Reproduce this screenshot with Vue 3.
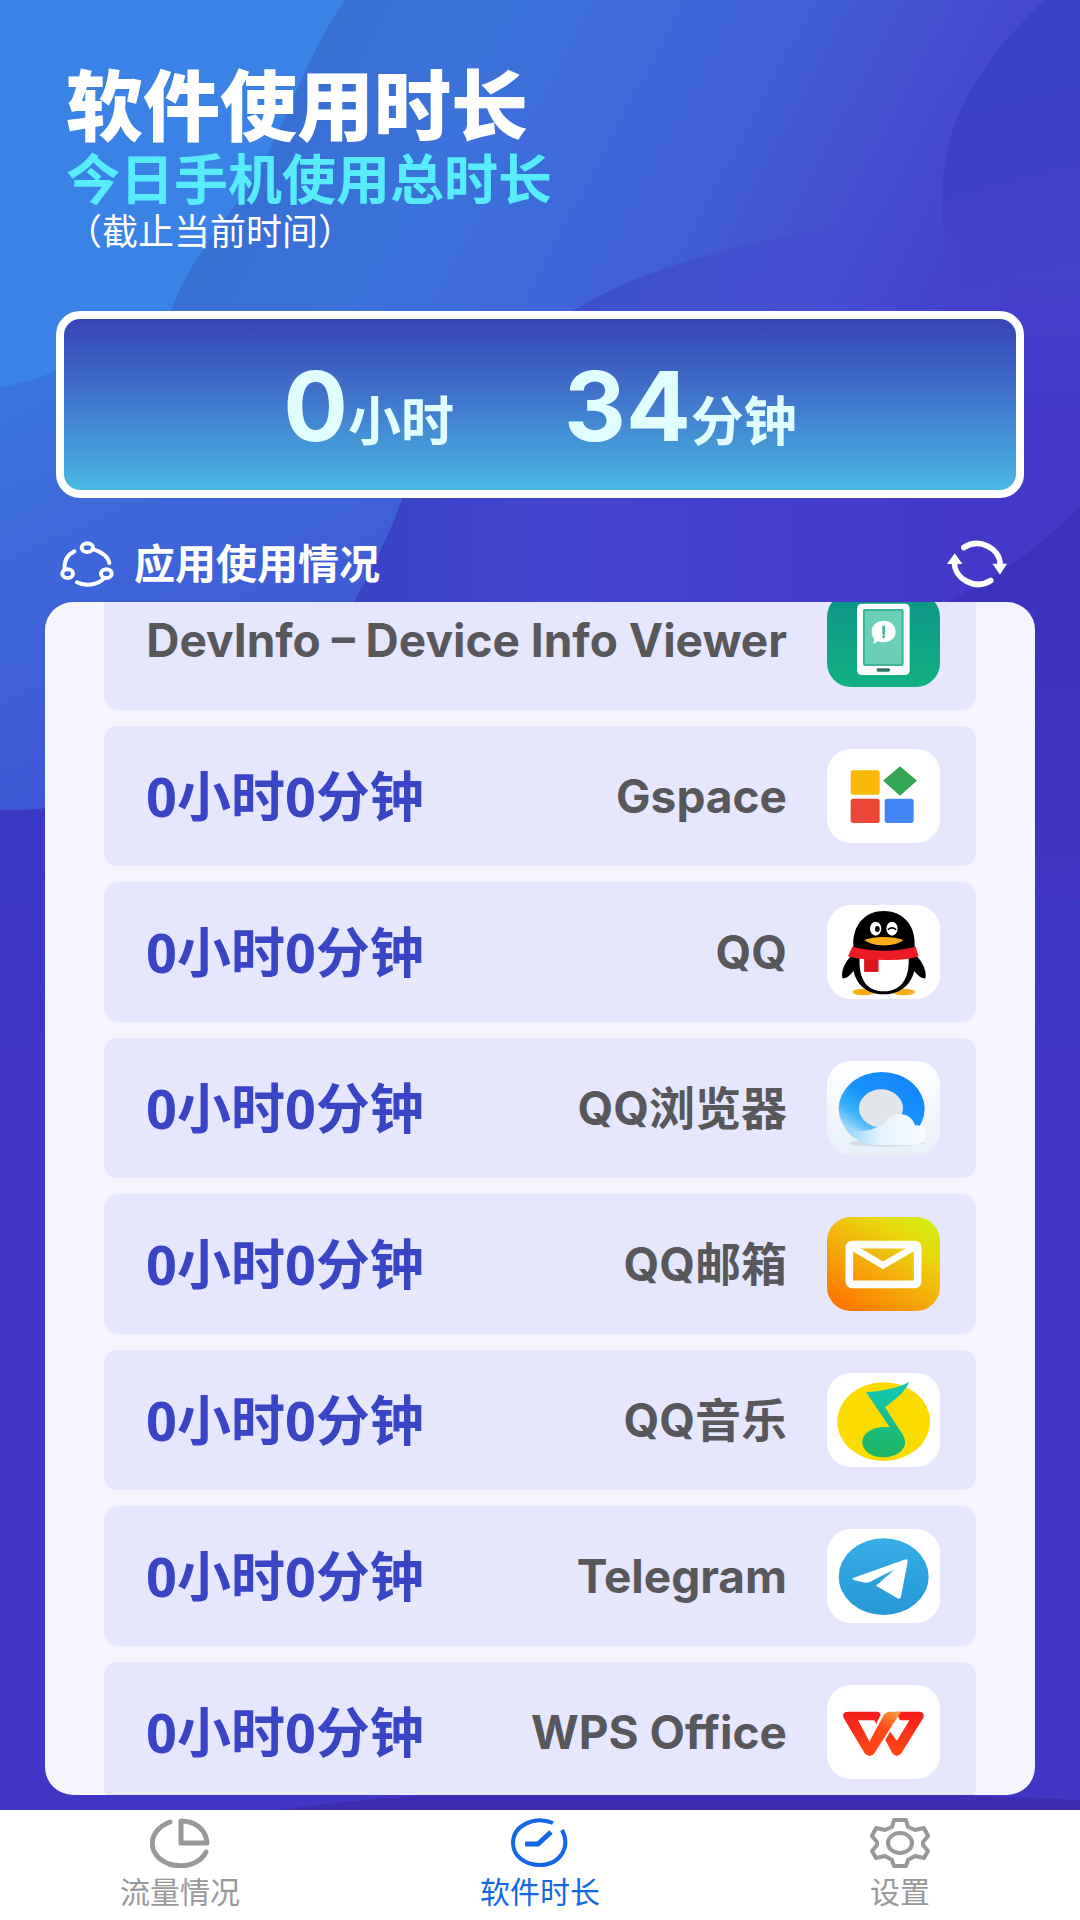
<template>
  <div class="page">
    <svg class="backdrop" viewBox="0 0 1080 1920" preserveAspectRatio="none" aria-hidden="true">
      <defs>
        <linearGradient id="bg-mid" gradientUnits="userSpaceOnUse" x1="300" y1="100" x2="900" y2="420">
          <stop offset="0" stop-color="#386fd3" />
          <stop offset="0.2" stop-color="#3b72da" />
          <stop offset="0.5" stop-color="#4064db" />
          <stop offset="0.75" stop-color="#4453d3" />
          <stop offset="1" stop-color="#4441cd" />
        </linearGradient>
        <linearGradient id="bg-left" gradientUnits="userSpaceOnUse" x1="0" y1="380" x2="200" y2="820">
          <stop offset="0" stop-color="#3a74de" />
          <stop offset="1" stop-color="#4152d4" />
        </linearGradient>
        <linearGradient id="bg-deep" gradientUnits="userSpaceOnUse" x1="580" y1="270" x2="900" y2="310">
          <stop offset="0" stop-color="#3b50c9" />
          <stop offset="0.4" stop-color="#404dce" stop-opacity="0.7" />
          <stop offset="0.8" stop-color="#4441cd" stop-opacity="0" />
        </linearGradient>
        <linearGradient id="bg-lower" gradientUnits="userSpaceOnUse" x1="380" y1="540" x2="960" y2="540">
          <stop offset="0" stop-color="#3843c6" />
          <stop offset="0.3" stop-color="#4345d0" />
          <stop offset="1" stop-color="#4338c8" />
        </linearGradient>
        <linearGradient id="bg-corner" gradientUnits="userSpaceOnUse" x1="970" y1="60" x2="1030" y2="300">
          <stop offset="0" stop-color="#3743c7" />
          <stop offset="0.5" stop-color="#3f40c8" />
          <stop offset="1" stop-color="#4440cb" stop-opacity="0" />
        </linearGradient>
        <linearGradient id="bg-edge" x1="0" y1="0" x2="0" y2="1">
          <stop offset="0" stop-color="#4338c8" stop-opacity="0" />
          <stop offset="1" stop-color="#4338c8" />
        </linearGradient>
        <linearGradient id="bg-side" x1="0" y1="0" x2="0" y2="1">
          <stop offset="0" stop-color="#3838c4" />
          <stop offset="0.25" stop-color="#4035c6" />
          <stop offset="1" stop-color="#4035c4" />
        </linearGradient>
        <linearGradient id="bg-fold" x1="0" y1="0" x2="0" y2="1">
          <stop offset="0" stop-color="#3b30ba" />
          <stop offset="1" stop-color="#4035c4" />
        </linearGradient>
      </defs>
      <rect y="780" width="1080" height="1140" fill="url(#bg-side)" />
      <rect width="1080" height="800" fill="#4137c6" />
      <path d="M0 0H1080V420H0Z" fill="url(#bg-mid)" />
      <path d="M0 370H460V602H350C250 740 120 815 0 810Z" fill="url(#bg-left)" />
      <path d="M0 0H345C310 50 290 110 265 160C235 215 190 250 168 320H120C90 360 50 378 0 388Z" fill="#3a82e5" />
      <path d="M560 320C640 260 800 230 945 205V400H560Z" fill="url(#bg-deep)" />
      <path d="M350 610C385 545 395 520 405 490L440 420H1080V610Z" fill="url(#bg-lower)" />
      <path d="M1045 0C970 70 942 130 942 200C942 240 950 270 960 300H1080V0Z" fill="url(#bg-corner)" />
      <rect x="1000" y="280" width="80" height="141" fill="url(#bg-edge)" />
      <path d="M1080 505C1040 550 985 585 930 610H1035V900H1080Z" fill="url(#bg-fold)" />
      <path d="M280 1810C480 1780 800 1790 1080 1800V1810Z" fill="#3b2cb0" />
    </svg>

    <header class="intro">
      <h1>软件使用时长</h1>
      <h2>今日手机使用总时长</h2>
      <p>（截止当前时间）</p>
    </header>

    <section class="total">
      <div class="total-part">
        <strong>{{ total.hours }}</strong><span>小时</span>
      </div>
      <div class="total-part">
        <strong>{{ total.minutes }}</strong><span>分钟</span>
      </div>
    </section>

    <div class="section-bar">
      <svg class="share-icon" viewBox="88 62 162 138" preserveAspectRatio="none" aria-hidden="true">
        <g fill="none" stroke="#fff" stroke-width="12" stroke-linecap="round">
          <ellipse cx="170" cy="82" rx="17" ry="13" />
          <ellipse cx="111" cy="160" rx="16" ry="13" />
          <ellipse cx="227" cy="160" rx="16" ry="13" />
          <path d="M188 87C214 94 234 111 236 128" />
          <path d="M131 93C108 105 100 123 102 146" />
          <path d="M139 186C160 198 203 195 220 174" />
        </g>
      </svg>
      <h3>应用使用情况</h3>
      <button type="button" class="refresh" aria-label="刷新" @click="refresh">
        <svg viewBox="135 60 192 142" preserveAspectRatio="none" aria-hidden="true">
          <g fill="none" stroke="#fff" stroke-width="17" stroke-linecap="round">
            <path d="M190 82C238 53 302 83 303 133" />
            <path d="M274 180C224 210 162 174 161 128" />
          </g>
          <path d="M279 130H324L302 163Z M138 131H186L162 99Z" fill="#fff" />
        </svg>
      </button>
    </div>

    <main ref="panel" class="panel">
      <ul class="app-list">
        <li v-for="app in apps" :key="app.id" class="app-row">
          <span v-if="app.time" class="app-time">{{ app.time }}</span>
          <span class="app-name">{{ app.name }}</span>
          <svg class="app-icon" viewBox="0 0 339 282" preserveAspectRatio="none" aria-hidden="true">
            <template v-if="app.id === 'devinfo'">
              <defs>
                <linearGradient id="dev-bg" x1="0" y1="0" x2="0" y2="1">
                  <stop offset="0" stop-color="#0c9488" />
                  <stop offset="1" stop-color="#12b083" />
                </linearGradient>
              </defs>
              <rect width="339" height="282" fill="url(#dev-bg)" />
              <rect x="90" y="32" width="158" height="214" rx="14" fill="#fff" />
              <rect x="108" y="48" width="122" height="171" rx="6" fill="#3cb59b" />
              <rect x="114" y="54" width="110" height="159" rx="4" fill="#6bcfb8" />
              <path d="M134 117C134 72 206 72 206 117C206 146 170 152 153 145L139 153L142 138C137 132 134 125 134 117Z" fill="#fff" />
              <path d="M170 101V122M170 131V132" stroke="#3cb59b" stroke-width="8" stroke-linecap="round" />
              <rect x="149" y="226" width="40" height="10" rx="4" fill="#2e776d" />
            </template>
            <template v-else-if="app.id === 'gspace'">
              <rect width="339" height="282" fill="#fff" />
              <rect x="71" y="64" width="87" height="73" rx="8" fill="#f9b904" />
              <rect x="71" y="149" width="87" height="73" rx="8" fill="#ea4535" />
              <rect x="173" y="149" width="87" height="73" rx="8" fill="#4286f5" />
              <path d="M219 55L266 95L219 137L172 95Z" fill="#34a653" stroke="#34a653" stroke-width="5" stroke-linejoin="round" />
            </template>
            <template v-else-if="app.id === 'qq'">
              <rect width="339" height="282" fill="#fff" />
              <ellipse cx="110" cy="261" rx="34" ry="10" fill="#f8ab14" />
              <ellipse cx="230" cy="261" rx="34" ry="10" fill="#f8ab14" />
              <path d="M82 145C48 172 42 207 47 220C59 223 75 205 86 190ZM260 145C292 172 300 207 295 220C283 223 266 205 255 190Z" fill="#000" />
              <path d="M79 122C77 55 118 18 170 18C223 18 266 55 263 122C280 225 230 268 170 268C110 268 62 225 79 122Z" fill="#000" />
              <path d="M98 158H245C248 220 222 259 170 259C118 259 94 220 98 158Z" fill="#fff" />
              <ellipse cx="146" cy="71" rx="17" ry="21" fill="#fff" />
              <ellipse cx="195" cy="71" rx="17" ry="21" fill="#fff" />
              <ellipse cx="151" cy="72" rx="7" ry="9" fill="#000" />
              <path d="M184 73Q195 64 206 73" fill="none" stroke="#000" stroke-width="5" stroke-linecap="round" />
              <path d="M112 105C140 93 200 93 229 105C208 126 137 127 112 105Z" fill="#f8ab14" />
              <path d="M76 125Q170 149 266 125L275 154Q240 168 154 164V200H112V163Q85 162 63 154Z" fill="#ed1b23" />
              <path d="M112 163Q135 166 154 164V200H112Z" fill="#d9141e" />
            </template>
            <template v-else-if="app.id === 'browser'">
              <defs>
                <linearGradient id="ring" x1="0.9" y1="0.1" x2="0.25" y2="1">
                  <stop offset="0" stop-color="#1683ff" />
                  <stop offset="0.45" stop-color="#1593fb" />
                  <stop offset="0.72" stop-color="#3fb2fa" />
                  <stop offset="1" stop-color="#d5effd" />
                </linearGradient>
                <linearGradient id="cloud" x1="0" y1="0" x2="1" y2="0">
                  <stop offset="0" stop-color="#8fd2fb" />
                  <stop offset="0.45" stop-color="#e6f4fe" />
                  <stop offset="1" stop-color="#f7fbfe" />
                </linearGradient>
                <linearGradient id="browser-bg" x1="0" y1="0" x2="0" y2="1">
                  <stop offset="0" stop-color="#ffffff" />
                  <stop offset="1" stop-color="#e8f0fa" />
                </linearGradient>
              </defs>
              <rect width="339" height="282" fill="url(#browser-bg)" />
              <ellipse cx="178" cy="246" rx="112" ry="11" fill="#d3dde8" />
              <ellipse cx="164" cy="143" rx="129" ry="110" fill="url(#ring)" />
              <ellipse cx="162" cy="142" rx="66" ry="57" fill="#e1e6eb" />
              <path d="M53 200C95 222 142 205 174 187C190 148 252 150 264 193C302 188 310 248 264 253H162C112 252 73 234 53 200Z" fill="url(#cloud)" />
            </template>
            <template v-else-if="app.id === 'mail'">
              <defs>
                <linearGradient id="mail-bg" x1="0.15" y1="1" x2="0.9" y2="0">
                  <stop offset="0" stop-color="#ff7300" />
                  <stop offset="0.5" stop-color="#f2b70c" />
                  <stop offset="0.75" stop-color="#e8d70c" />
                  <stop offset="1" stop-color="#d0ee10" />
                </linearGradient>
              </defs>
              <rect width="339" height="282" fill="url(#mail-bg)" />
              <rect x="67" y="83" width="205" height="119" rx="8" fill="none" stroke="#fff" stroke-width="23" />
              <path d="M72 88L168 145L266 88" fill="none" stroke="#fff" stroke-width="20" />
            </template>
            <template v-else-if="app.id === 'music'">
              <defs>
                <linearGradient id="note" x1="0" y1="0" x2="0" y2="1">
                  <stop offset="0" stop-color="#0fcab8" />
                  <stop offset="1" stop-color="#20b45e" />
                </linearGradient>
              </defs>
              <rect width="339" height="282" fill="#fff" />
              <ellipse cx="170" cy="146" rx="139" ry="118" fill="#fcdc00" />
              <path d="M117 57C165 55 210 46 247 27C230 63 205 78 174 103L226 183C254 228 205 253 170 253C132 253 106 233 106 207C106 177 145 157 188 163Z" fill="url(#note)" />
            </template>
            <template v-else-if="app.id === 'telegram'">
              <defs>
                <linearGradient id="tg" x1="0" y1="0" x2="0" y2="1">
                  <stop offset="0" stop-color="#38ade6" />
                  <stop offset="1" stop-color="#2598d5" />
                </linearGradient>
              </defs>
              <rect width="339" height="282" fill="#fff" />
              <ellipse cx="170" cy="143" rx="135" ry="115" fill="url(#tg)" />
              <path d="M80 146L232 92Q243 88 242 98L222 203Q219 213 210 207L147 170L203 121L128 159Q118 163 108 160L80 153Q73 150 80 146Z" fill="#fff" />
            </template>
            <template v-else>
              <defs>
                <linearGradient id="wps" x1="0" y1="0" x2="0" y2="1">
                  <stop offset="0" stop-color="#f31c1c" />
                  <stop offset="1" stop-color="#ff4b14" />
                </linearGradient>
                <linearGradient id="wps-fold" gradientUnits="userSpaceOnUse" x1="127" y1="202" x2="205" y2="85">
                  <stop offset="0" stop-color="#ff4214" />
                  <stop offset="0.6" stop-color="#ff4a18" />
                  <stop offset="1" stop-color="#f5963c" />
                </linearGradient>
              </defs>
              <rect width="339" height="282" fill="#fff" />
              <path d="M151 109L161 90Q159 80 150 80H62Q43 81 50 99L113 205Q127 221 142 205L127 169L93 106H141L149 117Z" fill="url(#wps)" />
              <path d="M189 140L175 165L196 205Q209 221 223 205L289 98Q294 81 277 80H207L219 106H247L210 167Z" fill="url(#wps)" />
              <path d="M188 80H222L142 205Q132 216 120 207L128 168L170 91Q177 80 188 80Z" fill="url(#wps-fold)" />
            </template>
          </svg>
        </li>
      </ul>
    </main>

    <nav class="tabs">
      <button
        v-for="tab in tabs"
        :key="tab.id"
        type="button"
        class="tab"
        :class="{ active: tab.id === activeTab }"
        @click="activeTab = tab.id"
      >
        <svg viewBox="0 0 60 50" preserveAspectRatio="none" aria-hidden="true">
          <g fill="none" stroke="currentColor" stroke-width="5">
            <template v-if="tab.id === 'traffic'">
              <path d="M20 4C-4 13-3 38 19 46C35 51 51 45 56 34" stroke-linecap="round" />
              <path d="M31 3V25H57C56 12 46 3 31 3Z" stroke-linejoin="round" />
            </template>
            <template v-else-if="tab.id === 'duration'">
              <path d="M43 5C24-3 3 8 3 25C3 38 15 47 30 47C50 47 61 29 52 12" stroke-width="4" />
              <path d="M15 26H28L41 14" />
            </template>
            <template v-else>
              <path d="M24 2H36L38 9L45 12L54 10L58 18L53 24V27L58 33L54 40L45 38L38 42L36 48H24L22 42L15 38L6 40L2 33L7 27V24L2 18L6 10L15 12L22 9Z" stroke-width="4" stroke-linejoin="round" />
              <ellipse cx="30" cy="25" rx="12" ry="10" stroke-width="4" />
            </template>
          </g>
        </svg>
        <span>{{ tab.label }}</span>
      </button>
    </nav>
  </div>
</template>

<script setup>
import { ref, onMounted } from 'vue'

const total = ref({ hours: 0, minutes: 34 })
const activeTab = ref('duration')
const panel = ref(null)

const apps = [
  { id: 'devinfo', name: 'DevInfo – Device Info Viewer', time: '' },
  { id: 'gspace', name: 'Gspace', time: '0小时0分钟' },
  { id: 'qq', name: 'QQ', time: '0小时0分钟' },
  { id: 'browser', name: 'QQ浏览器', time: '0小时0分钟' },
  { id: 'mail', name: 'QQ邮箱', time: '0小时0分钟' },
  { id: 'music', name: 'QQ音乐', time: '0小时0分钟' },
  { id: 'telegram', name: 'Telegram', time: '0小时0分钟' },
  { id: 'wps', name: 'WPS Office', time: '0小时0分钟' }
]

const tabs = [
  { id: 'traffic', label: '流量情况' },
  { id: 'duration', label: '软件时长' },
  { id: 'settings', label: '设置' }
]

function refresh() {
  panel.value.scrollTop = 0
}

onMounted(() => {
  // the list opens already scrolled a little
  panel.value.scrollTop = 32
})
</script>

<style>
body {
  margin: 0;
}
</style>

<style scoped>
.page {
  position: relative;
  display: flex;
  flex-direction: column;
  height: 100vh;
  overflow: hidden;
  font-family: Inter, "Noto Sans CJK SC", sans-serif;
  color: #fff;
}

.backdrop {
  position: absolute;
  inset: 0;
  width: 100%;
  height: 100%;
  z-index: -1;
}

h1,
h2,
h3,
p {
  margin: 0;
}

button {
  padding: 0;
  border: 0;
  background: none;
  font-family: inherit;
  cursor: pointer;
}

.intro {
  padding: 61px 66px 0;
}

.intro h1 {
  font-size: 77px;
  font-weight: 900;
  line-height: 92px;
}

.intro h2 {
  font-size: 54px;
  line-height: 56px;
  color: #57ecfc;
}

.intro p {
  font-size: 36px;
  line-height: 46px;
}

.total {
  display: flex;
  justify-content: center;
  gap: 110px;
  margin: 56px 56px 0;
  padding: 34px 0 15px;
  border: 8px solid #fff;
  border-radius: 24px;
  background: linear-gradient(#3744b6, #3f74cb 45%, #4bb8e3);
  color: #e0feff;
}

.total-part {
  display: flex;
  align-items: baseline;
  line-height: 106px;
}

.total-part strong {
  font-size: 96px;
}

.total-part span {
  font-size: 53px;
  font-weight: 600;
}

.section-bar {
  display: flex;
  align-items: center;
  gap: 20px;
  height: 64px;
  margin-top: 34px;
  padding: 0 72px 0 60px;
}

.section-bar h3 {
  flex: 1;
  font-size: 41px;
  line-height: 60px;
}

.share-icon {
  width: 54px;
  height: 46px;
}

.refresh svg {
  display: block;
  width: 62px;
  height: 48px;
}

.panel {
  flex: 1;
  min-height: 0;
  margin: 6px 45px 15px;
  border-radius: 28px;
  background: #f6f4fe;
  overflow-y: auto;
  scrollbar-width: none;
}

.app-list {
  display: flex;
  flex-direction: column;
  gap: 16px;
  margin: 0;
  padding: 0 59px 28px;
  list-style: none;
}

.app-row {
  display: flex;
  flex-shrink: 0;
  align-items: center;
  height: 140px;
  padding: 0 36px 0 42px;
  border-radius: 14px;
  background: #e6e7fc;
}

.app-time {
  font-family: "Noto Sans", "Noto Sans CJK SC", sans-serif;
  font-size: 54px;
  font-weight: 700;
  line-height: 72px;
  color: #3945c4;
  white-space: nowrap;
}

.app-name {
  margin-left: auto;
  font-size: 46px;
  font-weight: 700;
  line-height: 56px;
  color: #57575c;
  white-space: nowrap;
}

.app-icon {
  flex-shrink: 0;
  width: 113px;
  height: 94px;
  margin-left: 40px;
  border-radius: 24px;
}

.tabs {
  display: flex;
  height: 110px;
  background: #fff;
}

.tab {
  display: flex;
  flex: 1;
  flex-direction: column;
  align-items: center;
  justify-content: center;
  gap: 4px;
  color: #999;
  font-size: 30px;
  line-height: 40px;
}

.tab svg {
  width: 60px;
  height: 50px;
}

.tab.active {
  color: #1268e6;
}
</style>
